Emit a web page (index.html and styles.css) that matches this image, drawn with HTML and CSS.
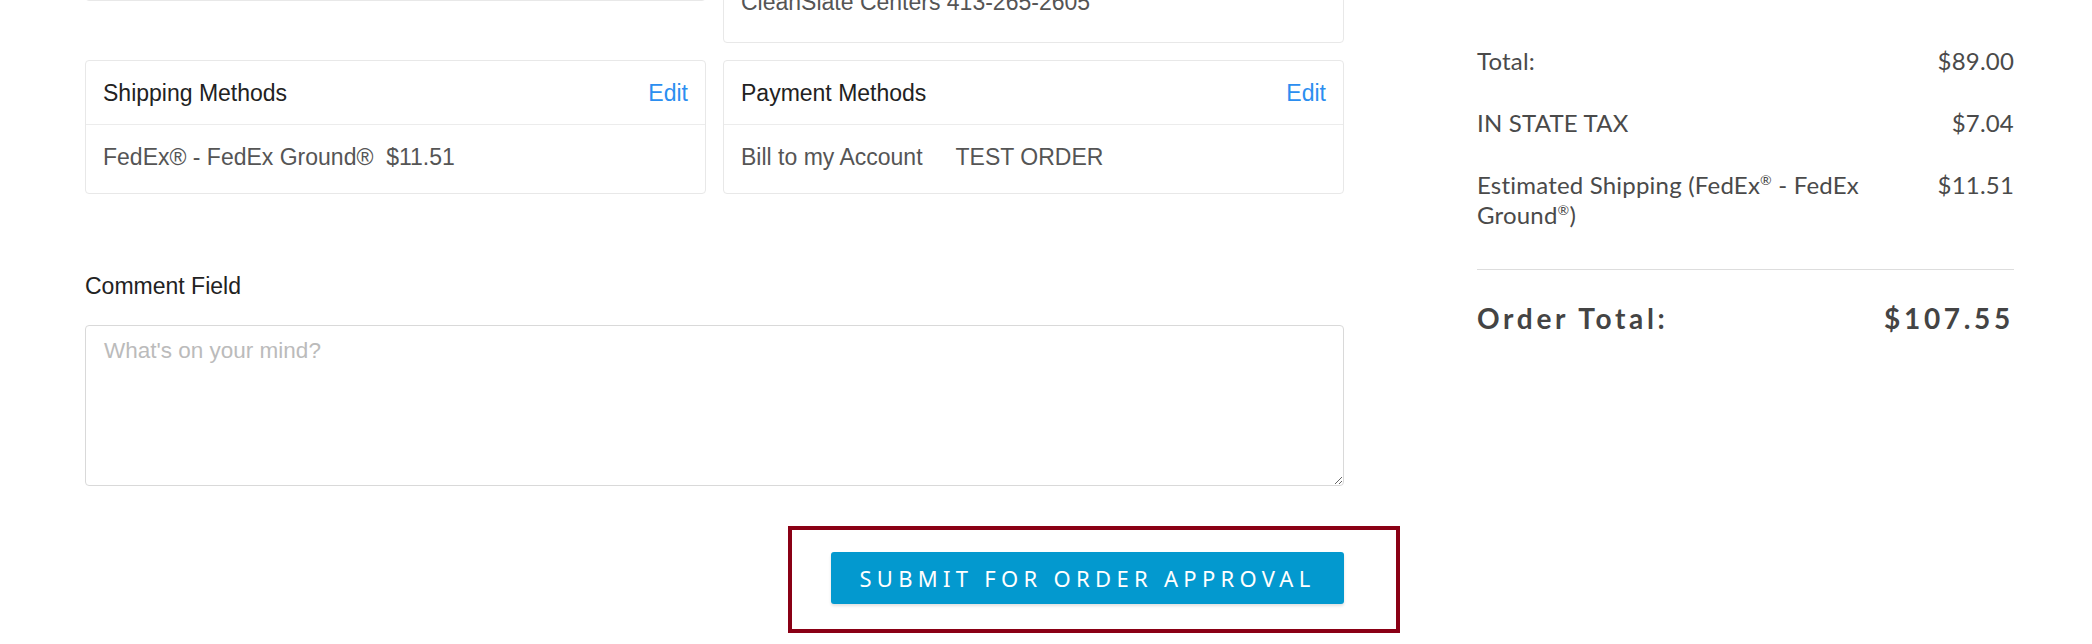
FILE: index.html
```html
<!DOCTYPE html>
<html lang="en">
<head>
    <meta charset="UTF-8">
    <meta name="viewport" content="width=device-width, initial-scale=1.0">
    <title>Review Order</title>
    <link rel="stylesheet" href="styles.css">
</head>
<body>
    <div class="checkout">
        <div class="main-col">
            <div class="card-row top-row">
                <div class="card card-short">
                    <div class="card-body">413-265-2605</div>
                </div>
                <div class="card">
                    <div class="card-body address">CleanSlate Centers 413-265-2605</div>
                </div>
            </div>

            <div class="card-row">
                <div class="card">
                    <div class="card-head">
                        <span>Shipping Methods</span>
                        <a href="#" class="edit-link">Edit</a>
                    </div>
                    <div class="card-body">FedEx® - FedEx Ground®&nbsp;&nbsp;$11.51</div>
                </div>
                <div class="card">
                    <div class="card-head">
                        <span>Payment Methods</span>
                        <a href="#" class="edit-link">Edit</a>
                    </div>
                    <div class="card-body">
                        <span class="pay-type">Bill to my Account</span>
                        <span>TEST ORDER</span>
                    </div>
                </div>
            </div>

            <div class="comment-group">
                <label for="comment">Comment Field</label>
                <textarea id="comment" name="comment" placeholder="What's on your mind?"></textarea>
            </div>

            <div class="submit-row">
                <div class="approve">
                    <span class="highlight"></span>
                    <button class="btn-submit" type="button">Submit for Order Approval</button>
                </div>
            </div>
        </div>

        <aside class="summary">
            <div class="summary-line">
                <span>Total:</span>
                <span>$89.00</span>
            </div>
            <div class="summary-line">
                <span>IN STATE TAX</span>
                <span>$7.04</span>
            </div>
            <div class="summary-line">
                <span class="label">Estimated Shipping (FedEx<sup>®</sup> - FedEx Ground<sup>®</sup>)</span>
                <span>$11.51</span>
            </div>
            <div class="summary-total">
                <span>Order Total:</span>
                <span>$107.55</span>
            </div>
        </aside>
    </div>
</body>
</html>
```

FILE: styles.css
```css
body {
    margin: 0;
    min-height: 644px;
    font-family: "Liberation Sans", Arial, sans-serif;
    font-size: 23px;
    line-height: 30px;
    color: #222;
    background-color: #fff;
}

.checkout {
    display: flex;
    gap: 133px;
    padding: 0 78px 40px 85px;
}

.main-col {
    width: 1259px;
}

.summary {
    width: 537px;
    padding-top: 30px;
    font-family: Lato, "Open Sans", sans-serif;
    font-size: 24px;
    letter-spacing: 0.2px;
    color: #4a4a4a;
}

/* cards */
.card-row {
    display: grid;
    grid-template-columns: 1fr 1fr;
    gap: 17px;
    align-items: start;
    margin-bottom: 17px;
}

.top-row {
    margin-top: -31px;
}

.card {
    border: 1px solid #e8e8e8;
    border-radius: 4px;
}

.card-head {
    display: flex;
    justify-content: space-between;
    padding: 17px 17px 16px;
    border-bottom: 1px solid #ececec;
}

.card-body {
    padding: 17px 17px 21px;
    color: #555;
}

.card-short .card-body {
    padding: 0 17px;
}

.card-body.address {
    padding: 17px 17px 25px;
}

.edit-link {
    color: #2b8ef0;
    text-decoration: none;
}

.pay-type {
    margin-right: 27px;
}

/* comment */
.comment-group {
    margin-top: 77px;
}

.comment-group label {
    display: block;
    margin-bottom: 24px;
}

.comment-group textarea {
    display: block;
    width: 100%;
    height: 161px;
    box-sizing: border-box;
    padding: 10px 18px;
    border: 1px solid #d9d9d9;
    border-radius: 4px;
    font-family: inherit;
    font-size: 22.5px;
    line-height: 30px;
    color: #555;
}

.comment-group textarea::placeholder {
    color: #bbb;
}

/* submit */
.submit-row {
    display: flex;
    justify-content: flex-end;
    margin-top: 66px;
}

.approve {
    position: relative;
}

.highlight {
    position: absolute;
    top: -26px;
    bottom: -29px;
    left: -43px;
    right: -56px;
    border: 4px solid #8a0015;
}

.btn-submit {
    display: block;
    width: 513px;
    height: 52px;
    padding: 0;
    border: none;
    border-radius: 3px;
    background-color: #0399cf;
    box-shadow: 0 2px 3px rgba(0, 0, 0, 0.12);
    color: #fff;
    font-family: "Noto Sans", sans-serif;
    font-size: 22px;
    letter-spacing: 5.3px;
    text-transform: uppercase;
    cursor: pointer;
}

/* order summary */
.summary-line {
    display: flex;
    justify-content: space-between;
    align-items: flex-start;
    padding: 16px 0;
}

.summary-line .label {
    max-width: 75%;
}

.summary-line sup {
    font-size: 14px;
    line-height: 1;
    vertical-align: 9px;
}

.summary-total {
    display: flex;
    justify-content: space-between;
    margin-top: 23px;
    padding-top: 28px;
    border-top: 1px solid #ddd;
    font-size: 28px;
    font-weight: 700;
    line-height: 40px;
    letter-spacing: 3.7px;
    color: #444;
}
```
